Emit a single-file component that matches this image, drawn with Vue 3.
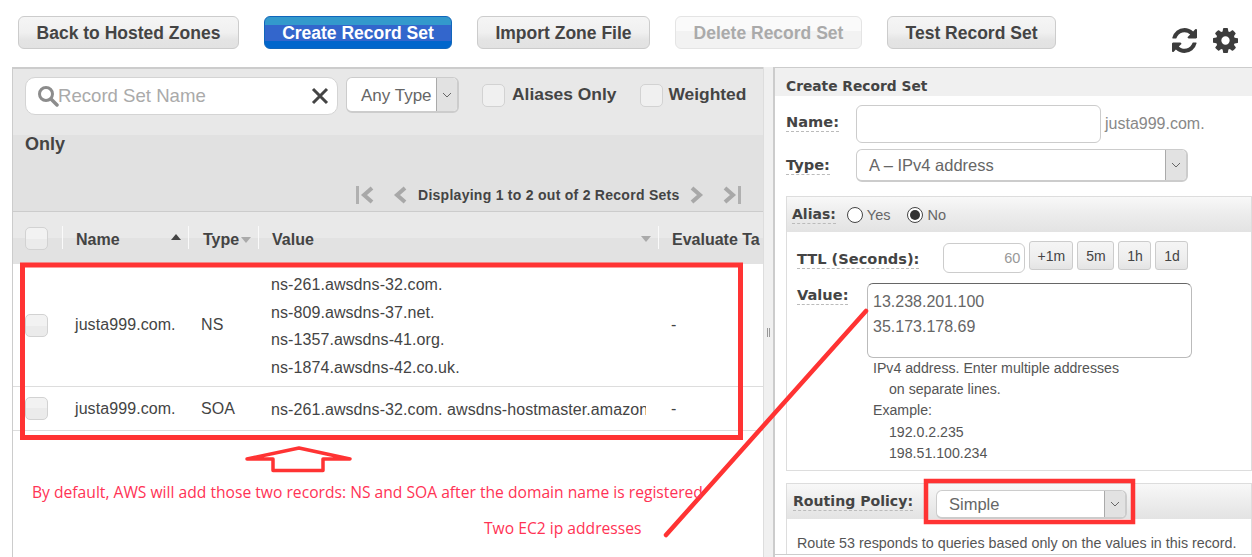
<template>
  <div class="page">
    <header class="toolbar">
      <button v-for="b in buttons" :key="b.label" class="btn" :class="b.kind">{{ b.label }}</button>
      <div class="tool-icons">
        <svg class="tool-icon" viewBox="0 0 1536 1536"><path d="M1511 928q0 5-1 7-64 268-268 434.5t-478 166.5q-146 0-282.5-55t-243.5-157l-129 129q-19 19-45 19t-45-19-19-45v-448q0-26 19-45t45-19h448q26 0 45 19t19 45-19 45l-137 137q71 66 161 102t187 36q134 0 250-65t186-179q11-17 53-117 8-23 30-23h192q13 0 22.5 9.5t9.5 22.5zm25-800v448q0 26-19 45t-45 19h-448q-26 0-45-19t-19-45 19-45l138-138q-148-137-349-137-134 0-250 65t-186 179q-11 17-53 117-8 23-30 23h-199q-13 0-22.5-9.5t-9.5-22.5v-7q65-268 270-434.5t480-166.5q146 0 284 55.5t245 156.5l130-129q19-19 45-19t45 19 19 45z"/></svg>
        <svg class="tool-icon" viewBox="0 0 1536 1536"><path d="M1024 768q0-106-75-181t-181-75-181 75-75 181 75 181 181 75 181-75 75-181zm512-109v222q0 12-8 23t-20 13l-185 28q-19 54-39 91 35 50 107 138 10 12 10 25t-9 23q-27 37-99 108t-94 71q-12 0-26-9l-138-108q-44 23-91 38-16 136-29 186-7 28-36 28h-222q-14 0-24.5-8.5t-11.5-21.5l-28-184q-49-16-90-37l-141 107q-10 9-25 9-14 0-25-11-126-114-165-168-7-10-7-23 0-12 8-23 15-21 51-66.5t54-70.5q-27-50-41-99l-183-27q-13-2-21-12.5t-8-23.5v-222q0-12 8-23t19-13l186-28q14-46 39-92-40-57-107-138-10-12-10-24 0-10 9-23 26-36 98.5-107.5t94.5-71.5q13 0 26 10l138 107q44-23 91-38 16-136 29-186 7-28 36-28h222q14 0 24.5 8.5t11.5 21.5l28 184q49 16 90 37l142-107q9-9 24-9 13 0 25 10 129 119 165 170 7 8 7 22 0 12-8 23-15 21-51 66.5t-54 70.5q26 50 41 98l183 28q13 2 21 12.5t8 23.5z"/></svg>
      </div>
    </header>

    <main class="columns">
      <section class="list-panel">
        <div class="filters">
          <div class="search">
            <svg class="search-icon" viewBox="0 0 22 22"><circle cx="9" cy="9" r="6.5" fill="none" stroke="#8c8c8c" stroke-width="3"/><path d="M14 14l6 6" stroke="#8c8c8c" stroke-width="3.5" stroke-linecap="round"/></svg>
            <span class="search-text">Record Set Name</span>
            <svg class="search-clear" viewBox="0 0 18 18"><path d="M2 2l14 14M16 2L2 16" stroke="#444" stroke-width="3"/></svg>
          </div>
          <div class="select type-filter">
            <span class="select-value">Any Type</span>
            <span class="select-arrow"><svg viewBox="0 0 10 6"><path d="M1 1l4 4 4-4" fill="none" stroke="#666"/></svg></span>
          </div>
          <span class="check filter-check"></span><span class="filter-label">Aliases Only</span>
          <span class="check filter-check second"></span><span class="filter-label">Weighted</span>
        </div>
        <div class="filter-rest">
          <div class="only">Only</div>
          <div class="pager">
            <svg class="pg first" viewBox="0 0 21 20"><path d="M2 1h3v18H2z" fill="#b0b0b0"/><path d="M18 3l-8 7 8 7" fill="none" stroke="#a8a8a8" stroke-width="4"/></svg>
            <svg class="pg prev" viewBox="0 0 16 20"><path d="M13 3l-8 7 8 7" fill="none" stroke="#a8a8a8" stroke-width="4"/></svg>
            <span class="pager-text">Displaying 1 to 2 out of 2 Record Sets</span>
            <svg class="pg next" viewBox="0 0 16 20"><path d="M3 3l8 7-8 7" fill="none" stroke="#a8a8a8" stroke-width="4"/></svg>
            <svg class="pg last" viewBox="0 0 21 20"><path d="M16 1h3v18h-3z" fill="#b0b0b0"/><path d="M3 3l8 7-8 7" fill="none" stroke="#a8a8a8" stroke-width="4"/></svg>
          </div>
        </div>

        <div class="grid-row head">
          <div class="cell"><span class="check"></span></div>
          <div class="cell sep name-head">Name<i class="sort up"></i></div>
          <div class="cell sep type-head">Type<i class="sort down"></i></div>
          <div class="cell sep value-head">Value<i class="sort down end"></i></div>
          <div class="cell sep eval-head"><span class="eval-text">Evaluate Target Health</span></div>
        </div>
        <div v-for="r in records" :key="r.type" class="grid-row record">
          <div class="cell"><span class="check"></span></div>
          <div class="cell name-cell">{{ r.name }}</div>
          <div class="cell type-cell">{{ r.type }}</div>
          <div class="cell value-cell">
            <div v-for="v in r.values" :key="v" class="value-line">{{ v }}</div>
          </div>
          <div class="cell eval-cell">-</div>
        </div>
      </section>

      <div class="splitter"><span class="grip"></span></div>

      <aside class="form-panel">
        <h2 class="form-title">Create Record Set</h2>
        <div class="form-row name-row">
          <span class="field-label">Name:</span>
          <span class="input name-input"></span>
          <span class="suffix">justa999.com.</span>
        </div>
        <div class="form-row type-row">
          <span class="field-label">Type:</span>
          <div class="select type-select">
            <span class="select-value">A – IPv4 address</span>
            <span class="select-arrow"><svg viewBox="0 0 10 6"><path d="M1 1l4 4 4-4" fill="none" stroke="#666"/></svg></span>
          </div>
        </div>

        <div class="box alias-box">
          <div class="box-head">
            <span class="field-label alias-label">Alias:</span>
            <span class="radio"></span><span class="radio-text">Yes</span>
            <span class="radio on"></span><span class="radio-text">No</span>
          </div>
          <div class="ttl-row">
            <span class="field-label">TTL (Seconds):</span>
            <span class="input ttl-input">60</span>
            <button v-for="t in ttlButtons" :key="t.label" class="ttl-btn" :style="{ width: t.width + 'px' }">{{ t.label }}</button>
          </div>
          <div class="value-row">
            <span class="field-label">Value:</span>
            <div class="value-body">
              <div class="textarea">13.238.201.100<br>35.173.178.69</div>
              <div class="help">
                <div>IPv4 address. Enter multiple addresses</div>
                <div class="indent">on separate lines.</div>
                <div>Example:</div>
                <div class="indent">192.0.2.235</div>
                <div class="indent">198.51.100.234</div>
              </div>
            </div>
          </div>
        </div>

        <div class="box routing-box">
          <div class="box-head routing-head">
            <span class="field-label routing-label">Routing Policy:</span>
            <div class="select routing-select">
              <span class="select-value">Simple</span>
              <span class="select-arrow"><svg viewBox="0 0 10 6"><path d="M1 1l4 4 4-4" fill="none" stroke="#666"/></svg></span>
            </div>
          </div>
          <p class="routing-note">Route 53 responds to queries based only on the values in this record.</p>
        </div>
      </aside>
    </main>

    <!-- red annotations drawn over the screenshot -->
    <svg class="marks" viewBox="0 0 1252 557">
      <rect x="22.5" y="265" width="718" height="172.5" fill="none" stroke="#ff3333" stroke-width="5"/>
      <rect x="926" y="481" width="207" height="41" fill="none" stroke="#ff3333" stroke-width="4.5"/>
      <path d="M247 459L299 448L350 459L323 459V470.5H273V459Z" fill="none" stroke="#ff3333" stroke-width="3.5" stroke-linejoin="round"/>
      <path d="M666 535L866 311" fill="none" stroke="#ff3333" stroke-width="4.5" stroke-linecap="round"/>
    </svg>
    <span class="note note-default">By default, AWS will add those two records: NS and SOA after the domain name is registered</span>
    <span class="note note-ec2">Two EC2 ip addresses</span>
  </div>
</template>

<script setup>
const buttons = [
  { label: 'Back to Hosted Zones', kind: 'back' },
  { label: 'Create Record Set', kind: 'primary' },
  { label: 'Import Zone File', kind: 'import' },
  { label: 'Delete Record Set', kind: 'disabled' },
  { label: 'Test Record Set', kind: 'test' },
]

const records = [
  {
    name: 'justa999.com.',
    type: 'NS',
    values: [
      'ns-261.awsdns-32.com.',
      'ns-809.awsdns-37.net.',
      'ns-1357.awsdns-41.org.',
      'ns-1874.awsdns-42.co.uk.',
    ],
  },
  {
    name: 'justa999.com.',
    type: 'SOA',
    values: ['ns-261.awsdns-32.com. awsdns-hostmaster.amazon.com. 1 7200 900'],
  },
]

const ttlButtons = [
  { label: '+1m', width: 44 },
  { label: '5m', width: 37 },
  { label: '1h', width: 33 },
  { label: '1d', width: 33 },
]
</script>

<style>
html,
body {
  margin: 0;
  background: #fff;
}
</style>

<style scoped>
.page {
  position: relative;
  width: 1252px;
  height: 557px;
  overflow: hidden;
  font-family: "Liberation Sans", Arial, sans-serif;
  color: #444;
  background: #fff;
}

.toolbar {
  display: flex;
  align-items: flex-start;
  gap: 25px;
  height: 67px;
  box-sizing: border-box;
  padding: 16px 0 0 18px;
}

.btn {
  height: 33px;
  padding: 2px 0 0;
  border: 1px solid #ccc;
  border-radius: 6px;
  background: linear-gradient(#f5f5f5 0, #f0f0f0 50%, #e4e4e4 75%, #e2e2e2 100%);
  font: bold 17.5px "Liberation Sans", Arial, sans-serif;
  color: #444;
}

.back { width: 221px; }
.import { width: 173px; }
.test { width: 169px; }

.primary {
  width: 188px;
  color: #fff;
  border-color: #1166bb;
  background: linear-gradient(#3399cc 0 25%, #3366cc 25% 78%, #0066cc 78%);
}

.disabled {
  width: 187px;
  color: #aaa;
  border-color: #e4e4e4;
  background: linear-gradient(#fafafa 0 45%, #f2f2f2 45%);
}

.tool-icons {
  display: flex;
  gap: 16px;
  margin: 12px 0 0 91px;
}

.tool-icon {
  width: 25px;
  height: 25px;
  fill: #3c3c3c;
}

.columns {
  display: flex;
  height: 490px;
}

.list-panel {
  width: 750px;
  flex: none;
  margin-left: 12px;
  border-left: 1px solid #ccc;
  overflow: hidden;
}

.filters {
  display: flex;
  align-items: flex-start;
  height: 68px;
  box-sizing: border-box;
  padding: 8px 0 0 12px;
  border-top: 2px solid #ccc;
  background: #e8e8e8;
}

.search {
  display: flex;
  align-items: center;
  width: 313px;
  height: 38px;
  box-sizing: border-box;
  padding: 0 8px 0 11px;
  border: 1px solid #d4d4d4;
  border-radius: 10px;
  background: #fff;
}

.search-icon {
  width: 22px;
  height: 22px;
  flex: none;
  margin-right: -1px;
}

.search-text {
  flex: 1;
  font-size: 18.6px;
  color: #aaa;
}

.search-clear {
  width: 18px;
  height: 18px;
}

.select {
  display: flex;
  align-items: stretch;
  height: 36px;
  box-sizing: border-box;
  border: 1px solid #ccc;
  border-radius: 6px;
  background: #fff;
  color: #666;
  font-size: 16.5px;
  overflow: hidden;
}

.select-value {
  flex: 1;
  display: flex;
  align-items: center;
  padding: 1px 0 0 12px;
}

.select-arrow {
  width: 20px;
  flex: none;
  display: flex;
  align-items: center;
  justify-content: center;
  border-left: 1px solid #aaa;
  background: #e2e2e2;
}

.select-arrow svg {
  width: 10px;
  height: 6px;
}

.type-filter {
  width: 113px;
  margin-left: 8px;
  border-width: 1px 2px 2px 1px;
}

.type-filter .select-value {
  padding: 3px 0 0 14px;
  font-size: 17px;
}

.check {
  display: inline-block;
  flex: none;
  width: 23px;
  height: 23px;
  box-sizing: border-box;
  border: 1px solid #d2d2d2;
  border-radius: 5px;
  background: linear-gradient(#f2f2f2 50%, #ebebeb 50%);
}

.filter-check {
  margin: 7px 7px 0 23px;
  background: #f0f0f0;
}

.filter-check.second {
  margin-left: 24px;
  margin-right: 5px;
}

.filter-label {
  font-size: 17.4px;
  font-weight: bold;
  line-height: 20px;
  margin-top: 7px;
  white-space: nowrap;
}

.filter-rest {
  height: 76px;
  padding-left: 12px;
  background: #e1e1e1;
  display: flex;
  flex-direction: column;
  justify-content: space-between;
}

.only {
  font-size: 18px;
  font-weight: bold;
  line-height: 18px;
}

.pager {
  display: flex;
  align-items: center;
  height: 20px;
  margin: 0 0 6px 329px;
}

.pg {
  height: 20px;
  flex: none;
}

.first { width: 21px; }
.prev { width: 16px; margin-left: 17px; }
.next { width: 16px; margin-left: 9px; }
.last { width: 21px; margin-left: 17px; }

.pager-text {
  margin-left: 10px;
  font-size: 14px;
  font-weight: bold;
  letter-spacing: 0.27px;
  white-space: nowrap;
}

.grid-row {
  display: grid;
  grid-template-columns: 49px 126px 70px 400px 105px;
}

.head {
  height: 52px;
  border-top: 1px solid #ccc;
  background: linear-gradient(#e9e9e9 50%, #e2e2e2 50%);
  font-size: 16px;
  font-weight: bold;
}

.cell {
  position: relative;
  display: flex;
  align-items: center;
  white-space: nowrap;
}

.cell > .check {
  margin-left: 12px;
}

.sep {
  padding: 3px 0 0 14px;
}

.sep::before {
  content: "";
  position: absolute;
  left: 0;
  top: 14px;
  height: 23px;
  width: 1px;
  background: #fafafa;
}

.type-head {
  padding-left: 15px;
}

.eval-text {
  display: block;
  width: 88px;
  overflow: hidden;
}

.sort {
  width: 0;
  height: 0;
  margin-left: 2px;
  border: 5px solid transparent;
  border-top-width: 0;
  border-bottom-width: 0;
}

.sort.up {
  position: absolute;
  left: 107px;
  top: 22px;
  border-bottom: 6px solid #444;
}

.sort.down {
  border-top: 6px solid #aaa;
}

.sort.end {
  position: absolute;
  left: 381px;
  top: 24px;
}

.record {
  min-height: 43px;
  border-bottom: 1px solid #ddd;
  font-size: 16px;
  letter-spacing: 0.08px;
  color: #444;
  background: #fff;
}

.name-cell { padding-left: 13px; }
.type-cell { padding-left: 13px; }

.value-cell {
  display: block;
  padding: 7px 0 5px 13px;
  margin-right: 12px;
  align-self: center;
  overflow: hidden;
}

.value-line {
  line-height: 27.5px;
}

.eval-cell { padding-left: 13px; }

.splitter {
  position: relative;
  width: 10px;
  flex: none;
  box-sizing: border-box;
  border-left: 1px solid #ddd;
  background: #f0f0f0;
}

.grip {
  position: absolute;
  left: 3px;
  top: 261px;
  width: 3px;
  height: 9px;
  border-left: 1px solid #999;
  border-right: 1px solid #999;
  box-sizing: border-box;
}

.form-panel {
  position: relative;
  flex: 1;
  min-width: 0;
  border-left: 2px solid #ccc;
  border-top: 1px solid #ccc;
  background: #fff;
}

.form-panel::after {
  content: "";
  position: absolute;
  left: 0;
  right: 0;
  top: 486px;
  height: 1px;
  background: #ccc;
}

.form-title {
  margin: 0;
  height: 28px;
  box-sizing: border-box;
  padding: 10px 0 0 11px;
  background: #f0f0f0;
  font: bold 13.8px/16px "DejaVu Sans", Verdana, sans-serif;
  color: #444;
}

.form-row {
  display: grid;
  grid-template-columns: 70px auto 1fr;
  align-items: center;
  padding-left: 11px;
}

.field-label {
  flex: none;
  justify-self: start;
  font: bold 14.6px/18px "DejaVu Sans", Verdana, sans-serif;
  color: #444;
  border-bottom: 1px dashed #bbb;
  white-space: nowrap;
}

.alias-label {
  font-size: 14px;
}

.routing-label {
  font-size: 14.1px;
}

.name-row {
  margin-top: 9px;
}

.name-row .field-label {
  margin-bottom: 4px;
}

.input {
  display: block;
  box-sizing: border-box;
  border: 1px solid #ccc;
  border-radius: 6px;
  background: #fff;
}

.name-input {
  width: 245px;
  height: 38px;
}

.suffix {
  margin-left: 4px;
  font-size: 16px;
  color: #888;
}

.type-row {
  margin-top: 6px;
}

.type-select {
  width: 332px;
  height: 33px;
}

.type-select,
.routing-select {
  border-width: 1px 2px 2px 1px;
}

.box {
  box-sizing: border-box;
  margin-left: 11px;
  border: 1px solid #ddd;
}

.alias-box {
  height: 275px;
  margin-top: 14px;
}

.box-head {
  display: flex;
  align-items: center;
  height: 35px;
  padding-left: 5px;
  background: linear-gradient(#f8f8f8 0, #ececec 50%, #e3e3e3 100%);
}

.radio {
  width: 16px;
  height: 16px;
  box-sizing: border-box;
  border: 1px solid #444;
  border-radius: 50%;
  background: #fff;
  margin-left: 11px;
  position: relative;
}

.radio.on {
  margin-left: 17px;
}

.radio.on::after {
  content: "";
  position: absolute;
  inset: 2px;
  border-radius: 50%;
  background: #333;
}

.radio-text {
  margin: 1px 0 0 4px;
  font-size: 14.5px;
  color: #666;
}

.ttl-row {
  display: flex;
  align-items: flex-start;
  padding: 9px 0 0 10px;
}

.ttl-row .field-label {
  margin: 9px 24px 0 0;
}

.ttl-input {
  width: 82px;
  height: 30px;
  margin: 2px 4px 0 0;
  padding-right: 4px;
  text-align: right;
  font-size: 14.5px;
  line-height: 29px;
  color: #999;
}

.ttl-btn {
  height: 29px;
  margin-right: 4px;
  padding: 0;
  border: 1px solid #ccc;
  border-radius: 3px;
  background: linear-gradient(#f5f5f5 0, #eeeeee 60%, #e4e4e4 100%);
  font: 14px "Liberation Sans", Arial, sans-serif;
  color: #444;
}

.value-row {
  display: grid;
  grid-template-columns: 70px 1fr;
  align-items: start;
  margin-top: 10px;
  padding-left: 10px;
}

.value-row .field-label {
  margin-top: 3px;
}

.textarea {
  width: 325px;
  height: 75px;
  box-sizing: border-box;
  padding: 5px;
  border: 1px solid #bbb;
  border-top-color: #666;
  border-radius: 6px;
  font-size: 16px;
  line-height: 25px;
  color: #666;
}

.help {
  margin-left: 6px;
  font-size: 14.15px;
  line-height: 21.2px;
  color: #555;
}

.indent {
  padding-left: 16px;
}

.routing-box {
  margin-top: 12px;
  height: 72px;
}

.routing-head {
  padding-left: 6px;
  background: linear-gradient(#f8f8f8 0, #ececec 55%, #e3e3e3 100%);
}

.routing-head .field-label {
  margin-right: 23px;
}

.routing-select {
  width: 191px;
  height: 29px;
  margin-top: 5px;
}

.routing-note {
  margin: 15px 0 0 10px;
  font-size: 14.3px;
  line-height: 18px;
  color: #555;
  white-space: nowrap;
}

.marks {
  position: absolute;
  inset: 0;
  width: 1252px;
  height: 557px;
  pointer-events: none;
}

.note {
  position: absolute;
  font-family: "Open Sans", "Noto Sans", sans-serif;
  font-size: 15.65px;
  line-height: 18px;
  color: #ff3355;
  white-space: nowrap;
}

.note-default { left: 32px; top: 483px; }
.note-ec2 { left: 484px; top: 519px; }
</style>
